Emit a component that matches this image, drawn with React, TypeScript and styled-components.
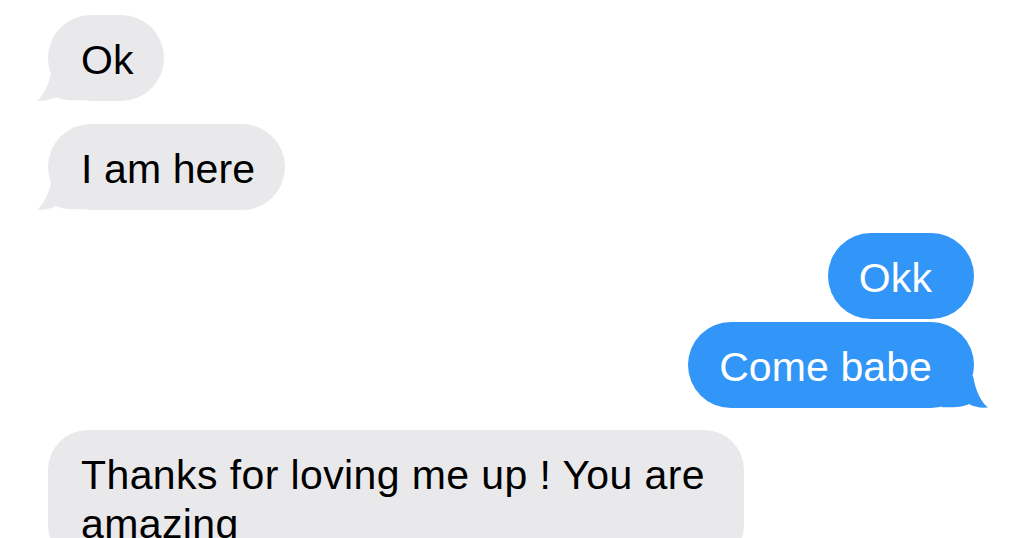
import React from "react";
import styled, { createGlobalStyle } from "styled-components";

const Global = createGlobalStyle`
  html, body { margin: 0; padding: 0; background: #ffffff; }
  body { width: 1024px; height: 538px; overflow: hidden; }
`;

const Thread = styled.div`
  display: flex;
  flex-direction: column;
  padding: 15px 50px 0 48px;
  font-family: "Liberation Sans", Arial, sans-serif;
`;

const Row = styled.div<{ $out?: boolean; $gap: number }>`
  display: flex;
  justify-content: ${(p) => (p.$out ? "flex-end" : "flex-start")};
  margin-top: ${(p) => p.$gap}px;
`;

const Bubble = styled.div<{ $out?: boolean; $wide?: boolean }>`
  position: relative;
  box-sizing: border-box;
  width: ${(p) => (p.$wide ? "696px" : "auto")};
  min-height: 86px;
  padding: ${(p) => (p.$out ? "21px 42px 16px 31px" : "21px 30px 16px 33px")};
  border-radius: ${(p) => (p.$wide ? "40px" : "43px")};
  background: ${(p) => (p.$out ? "#3196f8" : "#e9e9eb")};
  color: ${(p) => (p.$out ? "#ffffff" : "#000000")};
  font-size: 41px;
  line-height: 49px;
  letter-spacing: ${(p) => (p.$wide ? "0.4px" : "0.1px")};
`;

const Tail = styled.svg<{ $out?: boolean }>`
  position: absolute;
  bottom: 0;
  width: 46px;
  height: 32px;
  ${(p) => (p.$out ? "right: -14px; transform: scaleX(-1);" : "left: -11px;")}
`;

const TailShape = ({ out, color }: { out?: boolean; color: string }) => (
  <Tail $out={out} viewBox="0 0 46 32">
    <path
      d="M15 0 C12 16 7 26 0 31.5 C8 32.2 15 30.5 19 28 C25 31 34 31.6 46 31.3 L46 0 Z"
      fill={color}
    />
  </Tail>
);

type Msg = { text: string; out?: boolean; tail?: boolean; gap: number; wide?: boolean };

const messages: Msg[] = [
  { text: "Ok", tail: true, gap: 0 },
  { text: "I am here", tail: true, gap: 23 },
  { text: "Okk", out: true, gap: 23 },
  { text: "Come babe", out: true, tail: true, gap: 3 },
  { text: "Thanks for loving me up ! You are amazing", gap: 22, wide: true },
];

export default function App() {
  return (
    <>
      <Global />
      <Thread>
        {messages.map((m, i) => (
          <Row key={i} $out={m.out} $gap={m.gap}>
            <Bubble $out={m.out} $wide={m.wide}>
              {m.tail && <TailShape out={m.out} color={m.out ? "#3196f8" : "#e9e9eb"} />}
              {m.text}
            </Bubble>
          </Row>
        ))}
      </Thread>
    </>
  );
}
